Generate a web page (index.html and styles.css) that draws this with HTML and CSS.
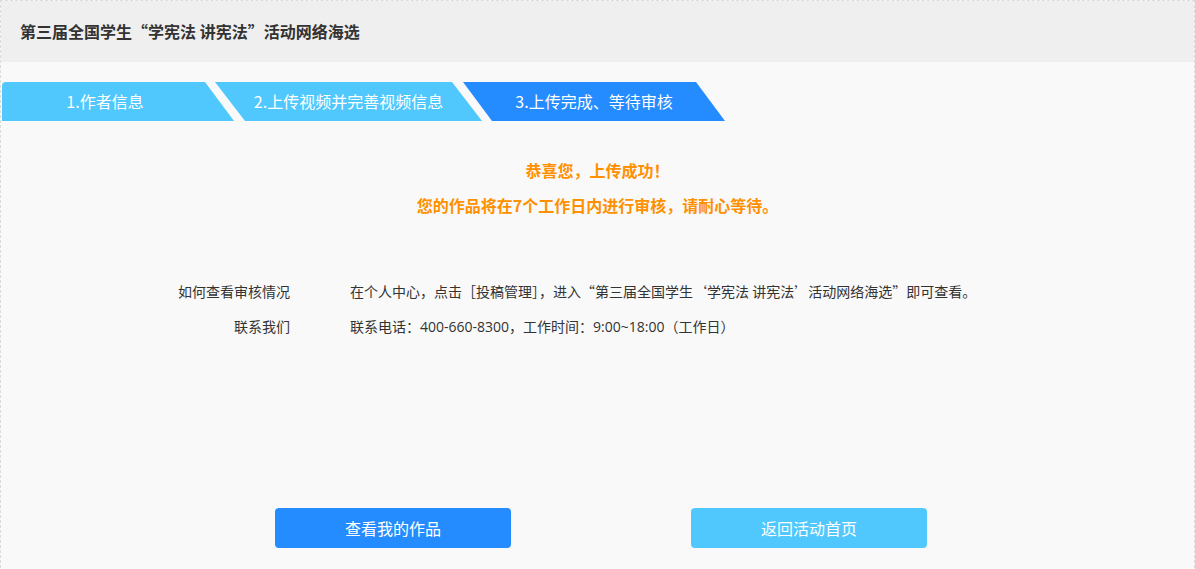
FILE: index.html
```html
<!DOCTYPE html>
<html lang="zh-CN">
<head>
  <meta charset="UTF-8">
  <title>上传完成</title>
  <meta name="viewport" content="width=device-width, initial-scale=1.0">
  <link rel="stylesheet" href="styles.css">
</head>
<body>
  <div class="page">
    <div class="header">第三届全国学生“学宪法 讲宪法”活动网络海选</div>
    <div class="steps">
      <div class="step step-first">1.作者信息</div>
      <div class="step step-second">2.上传视频并完善视频信息</div>
      <div class="step step-third active">3.上传完成、等待审核</div>
    </div>
    <div class="message">
      <p>恭喜您，上传成功！</p>
      <p>您的作品将在7个工作日内进行审核，请耐心等待。</p>
    </div>
    <div class="info">
      <div class="label">如何查看审核情况</div>
      <div class="value">在个人中心，点击［投稿管理］，进入“第三届全国学生‘学宪法 讲宪法’活动网络海选”即可查看。</div>
      <div class="label">联系我们</div>
      <div class="value contact">联系电话：400-660-8300，工作时间：9:00~18:00（工作日）</div>
    </div>
    <div class="actions">
      <button class="btn btn-primary">查看我的作品</button>
      <button class="btn btn-light">返回活动首页</button>
    </div>
  </div>
</body>
</html>
```

FILE: styles.css
```css
body {
  margin: 0;
  font-family: "Microsoft YaHei", "Noto Sans CJK SC", sans-serif;
  background: #f9f9f9;
  color: #333;
}
.page {
  border: 1px dashed #dcdcdc;
  border-bottom: none;
  height: 568px;
  box-sizing: border-box;
  overflow: hidden;
}
.header {
  height: 61px;
  line-height: 61px;
  padding-left: 19px;
  background: #efefef;
  font-size: 16px;
  font-weight: bold;
  color: #333;
}
.steps {
  display: flex;
  margin: 20px 0 0 1px;
  height: 39px;
}
.step {
  height: 39px;
  line-height: 39px;
  text-align: center;
  font-size: 16px;
  color: #fff;
  background: #50c8fe;
  box-sizing: border-box;
}
.step-first {
  width: 232px;
  padding-right: 26px;
  border-top-left-radius: 4px;
  clip-path: polygon(0 0, 203px 0, 100% 100%, 0 100%);
}
.step-second {
  width: 267px;
  margin-left: -19px;
  clip-path: polygon(0 0, 237px 0, 100% 100%, 30px 100%);
}
.step-third {
  width: 262px;
  margin-left: -19px;
  clip-path: polygon(0 0, 233px 0, 100% 100%, 29px 100%);
}
.step.active {
  background: #258cff;
}
.message {
  padding-top: 32px;
  text-align: center;
  color: #ff9000;
  font-size: 16px;
  font-weight: bold;
}
.message p {
  margin: 0;
  line-height: 35px;
}
.info {
  display: grid;
  grid-template-columns: 289px 1fr;
  column-gap: 60px;
  margin-top: 51px;
  font-size: 14px;
  line-height: 35px;
}
.label {
  text-align: right;
}
.contact {
  font-family: "Open Sans", "Noto Sans CJK SC", sans-serif;
}
.actions {
  display: flex;
  justify-content: center;
  gap: 180px;
  margin-top: 164px;
  padding-left: 7px;
}
.btn {
  width: 236px;
  height: 40px;
  border: none;
  border-radius: 4px;
  font-family: inherit;
  font-size: 16px;
  color: #fff;
  cursor: pointer;
}
.btn-primary {
  background: #258cff;
}
.btn-light {
  background: #50c8fe;
}
```
